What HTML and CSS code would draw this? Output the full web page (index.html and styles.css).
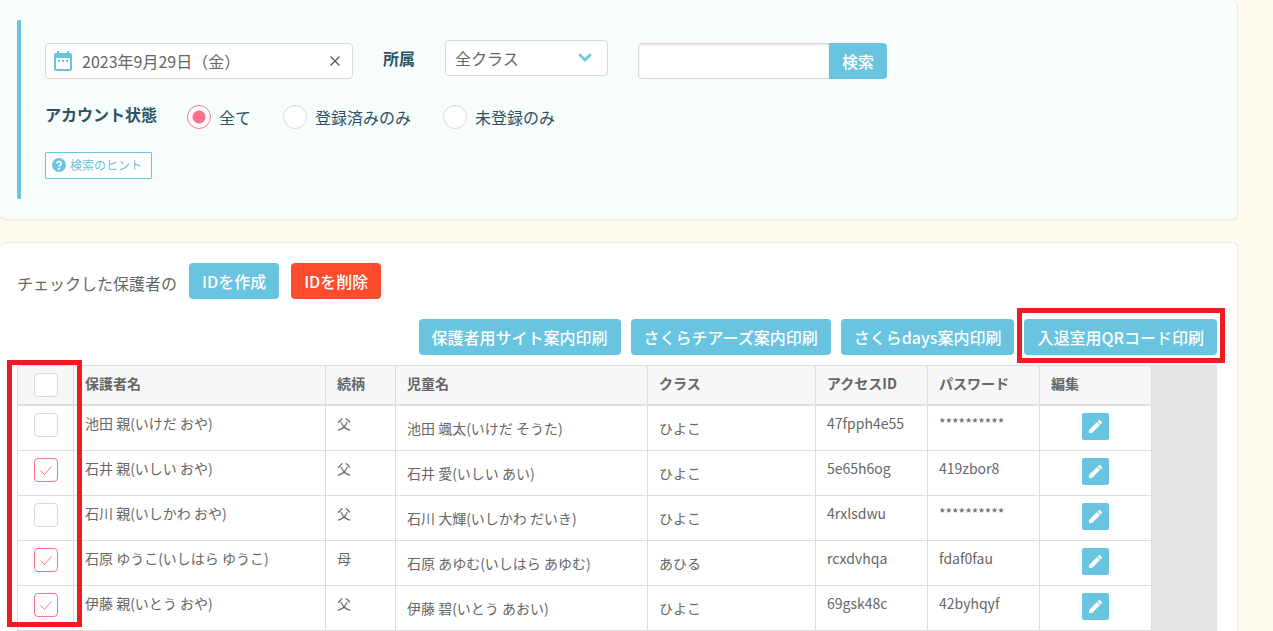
FILE: index.html
```html
<!DOCTYPE html>
<html lang="ja">
<head>
<meta charset="utf-8">
<title>保護者アカウント</title>
<link rel="stylesheet" href="styles.css">
</head>
<body>
<svg class="sprite" aria-hidden="true">
  <symbol id="pencil" viewBox="0 0 13 13"><path fill="currentColor" d="M0 13v-3L8 2l3 3-8 8zM8.600 1.400l1-1a1.200 1.200 0 0 1 1.700 0l1.300 1.300a1.200 1.200 0 0 1 0 1.700l-1 1z"/></symbol>
</svg>
<main class="page">
  <section class="card search-card">
    <form class="search">
      <div class="filters">
        <div class="date-field">
          <svg class="calendar" viewBox="0 0 18 20" aria-hidden="true"><path fill="#68c4df" fill-rule="evenodd" d="M3 0h2v2h8V0h2v2h1a2 2 0 0 1 2 2v14a2 2 0 0 1-2 2H2a2 2 0 0 1-2-2V4a2 2 0 0 1 2-2h1zM2 7v11h14V7zM4 9h2v2H4zM8 9h2v2H8zM12 9h2v2h-2z"/></svg>
          <input class="date-input" type="text" value="2023年9月29日（金）" aria-label="日付">
          <button class="clear" type="button" aria-label="クリア"><svg viewBox="0 0 10 10" width="10" height="10"><path d="M.5.5l9 9M9.500.5l-9 9" stroke="#555" stroke-width="1.300"/></svg></button>
        </div>
        <div class="class-filter">
          <label class="label" for="class">所属</label>
          <div class="select-box">
            <select class="select" id="class"><option>全クラス</option></select>
            <svg class="chevron" viewBox="0 0 14 10" aria-hidden="true"><path d="M2 2l5 5 5-5" fill="none" stroke="#68c4df" stroke-width="2.800" stroke-linecap="round"/></svg>
          </div>
        </div>
        <div class="keyword">
          <input class="keyword-input" type="text" aria-label="キーワード">
          <button class="btn keyword-btn" type="button">検索</button>
        </div>
      </div>
      <div class="status" role="radiogroup" aria-labelledby="status-label">
        <span class="label" id="status-label">アカウント状態</span>
        <div class="radios">
          <label class="radio"><input type="radio" name="status" checked>全て</label>
          <label class="radio"><input type="radio" name="status">登録済みのみ</label>
          <label class="radio"><input type="radio" name="status">未登録のみ</label>
        </div>
      </div>
      <button class="hint" type="button">
        <svg viewBox="0 0 14 14" width="14" height="14" aria-hidden="true"><circle cx="7" cy="7" r="7" fill="#68c4df"/><path d="M4.900 5.500a2.100 2 0 1 1 3.200 1.700c-.8.5-1.100.8-1.100 1.500" fill="none" stroke="#fff" stroke-width="1.700"/><circle cx="7" cy="10.800" r="1.100" fill="#fff"/></svg>
        検索のヒント
      </button>
    </form>
  </section>

  <section class="card list-card">
    <div class="actions">
      <span class="actions-text">チェックした保護者の</span>
      <button class="btn" type="button">IDを作成</button>
      <button class="btn danger" type="button">IDを削除</button>
    </div>
    <div class="prints">
      <button class="btn" type="button">保護者用サイト案内印刷</button>
      <button class="btn" type="button">さくらチアーズ案内印刷</button>
      <button class="btn" type="button">さくらdays案内印刷</button>
      <div class="marked">
        <button class="btn" type="button">入退室用QRコード印刷</button>
        <div class="mark mark-print"></div>
      </div>
    </div>
    <div class="table-area">
      <table class="table">
        <colgroup><col class="c-check"><col class="c-name"><col class="c-rel"><col class="c-name"><col class="c-class"><col class="c-id"><col class="c-id"><col class="c-id"></colgroup>
        <thead>
          <tr><th class="check"><input type="checkbox" aria-label="全て選択"></th><th>保護者名</th><th>続柄</th><th>児童名</th><th>クラス</th><th>アクセスID</th><th>パスワード</th><th>編集</th></tr>
        </thead>
        <tbody>
          <tr><td class="check"><input type="checkbox" aria-label="池田 親"></td><td>池田 親(いけだ おや)</td><td>父</td><td class="child">池田 颯太(いけだ そうた)</td><td class="child">ひよこ</td><td>47fpph4e55</td><td>**********</td><td class="edit-cell"><button class="edit" type="button" aria-label="編集"><svg width="13" height="13"><use href="#pencil"/></svg></button></td></tr>
          <tr><td class="check"><input type="checkbox" aria-label="石井 親" checked></td><td>石井 親(いしい おや)</td><td>父</td><td class="child">石井 愛(いしい あい)</td><td class="child">ひよこ</td><td>5e65h6og</td><td>419zbor8</td><td class="edit-cell"><button class="edit" type="button" aria-label="編集"><svg width="13" height="13"><use href="#pencil"/></svg></button></td></tr>
          <tr><td class="check"><input type="checkbox" aria-label="石川 親"></td><td>石川 親(いしかわ おや)</td><td>父</td><td class="child">石川 大輝(いしかわ だいき)</td><td class="child">ひよこ</td><td>4rxlsdwu</td><td>**********</td><td class="edit-cell"><button class="edit" type="button" aria-label="編集"><svg width="13" height="13"><use href="#pencil"/></svg></button></td></tr>
          <tr><td class="check"><input type="checkbox" aria-label="石原 ゆうこ" checked></td><td>石原 ゆうこ(いしはら ゆうこ)</td><td>母</td><td class="child">石原 あゆむ(いしはら あゆむ)</td><td class="child">あひる</td><td>rcxdvhqa</td><td>fdaf0fau</td><td class="edit-cell"><button class="edit" type="button" aria-label="編集"><svg width="13" height="13"><use href="#pencil"/></svg></button></td></tr>
          <tr><td class="check"><input type="checkbox" aria-label="伊藤 親" checked></td><td>伊藤 親(いとう おや)</td><td>父</td><td class="child">伊藤 碧(いとう あおい)</td><td class="child">ひよこ</td><td>69gsk48c</td><td>42byhqyf</td><td class="edit-cell"><button class="edit" type="button" aria-label="編集"><svg width="13" height="13"><use href="#pencil"/></svg></button></td></tr>
        </tbody>
      </table>
      <div class="mark mark-checks"></div>
    </div>
  </section>
</main>
</body>
</html>
```
FILE: styles.css
```css
* { box-sizing: border-box; }

body {
  margin: 0;
  background: #fffaee;
  color: #666;
  font: 16px/24px "Noto Sans CJK JP", sans-serif;
}

button, input, select { font: inherit; color: inherit; margin: 0; }
.sprite { position: absolute; width: 0; height: 0; }

.page {
  display: flex;
  flex-direction: column;
  gap: 22px;
  padding-right: 35px;
}

.card {
  border: 1px solid #eee9dd;
  border-left: 0;
  border-radius: 6px;
  background: #fff;
  box-shadow: 0 1px 2px rgba(120, 100, 50, 0.06);
}

/* Search panel */
.search-card {
  padding: 20px 20px 20px 17px;
  border-top: 0;
  background: #f7fdfd;
}
.search {
  padding: 20px 0 20px 24px;
  border-left: 4px solid #68c4df;
  border-radius: 2px 0 0 2px;
}
.filters { display: flex; align-items: flex-end; gap: 30px; }
.date-field {
  display: flex;
  align-items: center;
  width: 308px;
  height: 36px;
  padding: 0 12px 0 8px;
  border: 1px solid #d9d9d9;
  border-radius: 4px;
  background: #fff;
}
.calendar { flex: none; width: 18px; height: 20px; }
.date-input {
  flex: 1;
  min-width: 0;
  padding: 0 0 0 10px;
  border: 0;
  background: none;
}
.clear { display: flex; padding: 0; border: 0; background: none; }

.label { color: #2b5362; font-weight: 700; }
.class-filter { display: flex; align-items: center; gap: 30px; padding-bottom: 3px; }
.select-box { display: grid; align-items: center; width: 163px; }
.select {
  grid-area: 1 / 1;
  appearance: none;
  height: 36px;
  padding: 0 9px;
  border: 1px solid #d9d9d9;
  border-radius: 4px;
  background: #fff;
}
.chevron {
  grid-area: 1 / 1;
  justify-self: end;
  width: 14px;
  height: 10px;
  margin-right: 16px;
  pointer-events: none;
}

.btn {
  height: 36px;
  padding: 0 13px;
  border: 0;
  border-radius: 4px;
  background: #68c4df;
  color: #fff;
  font-weight: 500;
  white-space: nowrap;
}
.danger { background: #ff4b2d; }

.keyword { display: flex; }
.keyword-input {
  width: 191px;
  height: 36px;
  padding: 0 10px;
  border: 1px solid #d9d9d9;
  border-right: 0;
  border-radius: 4px 0 0 4px;
  background: #fff;
  box-shadow: inset 0 1px 2px rgba(0, 0, 0, 0.12);
}
.keyword-btn { border-radius: 0 4px 4px 0; }

.status { display: flex; gap: 30px; margin: 26px 0 23px; line-height: 18px; }
.radios { display: flex; gap: 32px; }
.radio {
  display: flex;
  align-items: center;
  gap: 8px;
  color: #2b5362;
}
.radio input {
  appearance: none;
  width: 24px;
  height: 24px;
  border: 1px solid #d9d9d9;
  border-radius: 50%;
  background: #fff;
}
.radio input:checked {
  border-color: #ff708c;
  background: radial-gradient(circle, #ff708c 6px, #fff 7px);
}

.hint {
  display: flex;
  align-items: center;
  gap: 4px;
  height: 27px;
  padding: 0 9px 1px 6px;
  border: 1px solid #68c4df;
  border-radius: 1px;
  background: #fff;
  color: #68c4df;
  font-size: 12px;
}

/* Account list */
.list-card { padding: 20px 20px 0 17px; border-bottom: 0; border-radius: 6px 6px 0 0; }
.actions { display: flex; gap: 12px; margin-bottom: 20px; }
.actions-text { padding-top: 8px; }
.prints { display: flex; justify-content: flex-end; gap: 10px; margin-bottom: 10px; }
.marked, .table-area { position: relative; }
.table-area { background: #e4e4e4; }

.table {
  width: 1135px;
  border-collapse: collapse;
  table-layout: fixed;
  background: #fff;
  font-size: 14px;
  line-height: 20px;
}
.c-check { width: 56px; }
.c-name { width: 252px; }
.c-rel { width: 70px; }
.c-class { width: 168px; }
.c-id { width: 112px; }
.table th, .table td {
  height: 45px;
  padding: 7px 10px 0 11px;
  border: 1px solid #ddd;
  text-align: left;
  vertical-align: top;
}
.table tbody tr:first-child td { height: 46px; }
.table th {
  height: 39px;
  border-bottom-width: 2px;
  background: #f7f7f7;
  font-weight: 700;
}
.table .child { padding-top: 12px; }
.table .check { padding: 7px 0 0 16px; }
.table .edit-cell { padding: 7px 0 0; }

.check input {
  display: block;
  appearance: none;
  width: 24px;
  height: 24px;
  border: 1px solid #d9d9d9;
  border-radius: 4px;
  background: #fff;
}
.check input:checked {
  border-color: #ff708c;
  background: #fff url("data:image/svg+xml,%3Csvg xmlns='http://www.w3.org/2000/svg' viewBox='0 0 12 9'%3E%3Cpath d='M.5 4.500l4 4 7-8' fill='none' stroke='%23ff708c'/%3E%3C/svg%3E") center / 12px 9px no-repeat;
}

.edit {
  display: flex;
  align-items: center;
  justify-content: center;
  width: 27px;
  height: 27px;
  margin: 0 auto;
  padding: 0;
  border: 0;
  border-radius: 2px;
  background: #68c4df;
  color: #fff;
}

/* Highlight frames over the controls being explained */
.mark { position: absolute; border: 5px solid #ed1c24; pointer-events: none; }
.mark-print { inset: -11px -8px -8px -7px; }
.mark-checks { top: -5px; left: -10px; width: 75px; height: 267px; }
```
